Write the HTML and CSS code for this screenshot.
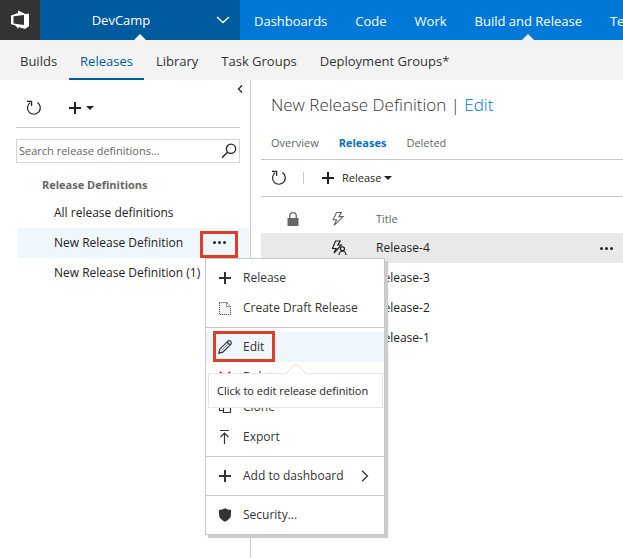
FILE: index.html
```html
<!DOCTYPE html>
<html lang="en">
<head>
<meta charset="utf-8">
<meta name="viewport" content="width=device-width, initial-scale=1">
<title>Releases - DevCamp</title>
<link rel="stylesheet" href="styles.css">
</head>
<body>
<svg class="sprite" aria-hidden="true">
  <symbol id="i-plus" viewBox="0 0 14 14"><path d="M7 1v12M1 7h12" fill="none" stroke="currentColor" stroke-width="2"/></symbol>
  <symbol id="i-refresh" viewBox="0 0 16 16"><path d="M4 2.8a6.4 6.4 0 1 0 7.4-.3M1 1.4h4.6v4.5" fill="none" stroke="currentColor" stroke-width="1.2"/></symbol>
  <symbol id="i-bolt" viewBox="0 0 14 16"><path d="M5.500 1.500h5L7.800 5.600h4.400L3 14.300l2.600-5.500H2.100z" fill="none" stroke="currentColor" stroke-width="1.1"/></symbol>
</svg>

<header class="topbar">
  <a class="logo" href="#" aria-label="Home">
    <svg width="20" height="20" viewBox="0 0 20 20"><path fill="#fff" fill-rule="evenodd" d="M1 5.500 8 3V.5L15.500 4l3.500-.5v12.700l-4 2.800-6.500-2v2L5 15.200l-4-1zM3.500 6.300v7.200L14 15V5z"/></svg>
  </a>
  <button class="project" type="button">
    <span class="project-name">DevCamp</span>
    <svg class="chevron" width="14" height="8" viewBox="0 0 14 8"><path d="m1 1 6 5.500L13 1" fill="none" stroke="currentColor" stroke-width="1.4"/></svg>
  </button>
  <nav class="hubs">
    <a href="#">Dashboards</a>
    <a href="#">Code</a>
    <a href="#">Work</a>
    <a class="current" href="#">Build and Release</a>
    <a href="#">Test</a>
  </nav>
</header>

<nav class="subnav">
  <a href="#">Builds</a>
  <a class="current" href="#">Releases</a>
  <a href="#">Library</a>
  <a href="#">Task Groups</a>
  <a href="#">Deployment Groups*</a>
</nav>

<div class="workspace">
  <aside class="sidebar">
    <button class="collapse" type="button" aria-label="Collapse pane">
      <svg width="6" height="8" viewBox="0 0 6 8"><path d="M5 .5 1.500 4 5 7.500" fill="none" stroke="currentColor" stroke-width="1.3"/></svg>
    </button>
    <div class="side-tools">
      <button type="button" aria-label="Refresh"><svg width="16" height="16"><use href="#i-refresh"/></svg></button>
      <button class="add" type="button" aria-label="New">
        <svg width="14" height="14"><use href="#i-plus"/></svg><span class="caret"></span>
      </button>
    </div>
    <form class="search">
      <input type="text" aria-label="Search release definitions" placeholder="Search release definitions...">
      <button type="submit" aria-label="Search">
        <svg width="16" height="16" viewBox="0 0 16 16"><circle cx="10" cy="5.800" r="4.600" fill="none" stroke="currentColor" stroke-width="1.3"/><path d="M6.700 9.100 1 14.800" stroke="currentColor" stroke-width="1.4"/></svg>
      </button>
    </form>
    <h2>Release Definitions</h2>
    <ul class="definitions">
      <li><a href="#">All release definitions</a></li>
      <li class="selected">
        <a href="#">New Release Definition</a>
        <button class="more highlight" type="button" aria-label="More actions"><i></i><i></i><i></i></button>
        <div class="menu" role="menu">
          <button type="button" role="menuitem"><svg width="14" height="14"><use href="#i-plus"/></svg>Release</button>
          <button type="button" role="menuitem"><svg width="14" height="14" viewBox="0 0 14 14"><path d="M1.500 1.500h7l4 4v8h-11zM8.500 1.500v4h4" fill="#f4f4f4" stroke="currentColor" stroke-dasharray="1 1"/></svg>Create Draft Release</button>
          <hr>
          <button class="active" type="button" role="menuitem" aria-describedby="edit-tip">
            <svg width="14" height="14" viewBox="0 0 14 14"><path d="m.8 13.200 1-4L9.700 1.300a2 2 0 0 1 3 3L4.800 12.200zM9 2l3 3" fill="none" stroke="currentColor" stroke-width="1.200"/><path d="m3.600 10.400 6-6" stroke="currentColor" stroke-width=".6"/></svg>Edit
          </button>
          <button type="button" role="menuitem"><svg class="danger" width="14" height="14" viewBox="0 0 14 14"><path d="m2 2 10 10M12 2 2 12" stroke="currentColor" stroke-width="2"/></svg>Delete</button>
          <button type="button" role="menuitem"><svg width="14" height="14" viewBox="0 0 14 14"><path d="M5.500 3.500h7v9h-7zM5.500 10.500h-4v-9h7v2" fill="none" stroke="currentColor" stroke-width="1.200"/></svg>Clone</button>
          <button type="button" role="menuitem"><svg width="14" height="14" viewBox="0 0 14 14"><path d="M2 .5h9M6.500 14V3M2.500 7l4-4 4 4" fill="none" stroke="currentColor" stroke-width="1.200"/></svg>Export</button>
          <hr>
          <button type="button" role="menuitem"><svg width="14" height="14"><use href="#i-plus"/></svg>Add to dashboard
            <svg class="submenu" width="8" height="12" viewBox="0 0 8 12"><path d="m1 .7 5.500 5.300L1 11.300" fill="none" stroke="currentColor" stroke-width="1.300"/></svg>
          </button>
          <hr>
          <button type="button" role="menuitem"><svg width="14" height="14" viewBox="0 0 14 14"><path d="M7 .3Q9.500 2 13 2v4.500q0 4.500-6 7.200Q1 11 1 6.500V2q3.500 0 6-1.700z" fill="currentColor"/></svg>Security...</button>
          <span class="edit-mark"></span>
          <div class="tooltip" id="edit-tip" role="tooltip">Click to edit release definition</div>
        </div>
      </li>
      <li><a href="#">New Release Definition (1)</a></li>
    </ul>
  </aside>

  <main>
    <h1>New Release Definition | <a href="#">Edit</a></h1>
    <nav class="tabs">
      <a href="#">Overview</a>
      <a class="current" href="#">Releases</a>
      <a href="#">Deleted</a>
    </nav>
    <div class="main-tools">
      <button type="button" aria-label="Refresh"><svg width="16" height="16"><use href="#i-refresh"/></svg></button>
      <span class="divider"></span>
      <button class="release" type="button"><svg width="14" height="14"><use href="#i-plus"/></svg><span>Release</span><span class="caret"></span></button>
    </div>
    <table>
      <colgroup><col class="c-lock"><col class="c-bolt"><col><col class="c-more"></colgroup>
      <thead>
        <tr>
          <th aria-label="Locked"><svg width="12" height="14" viewBox="0 0 12 14"><path d="M2.700 7V4a3.300 3.300 0 0 1 6.600 0v3" fill="none" stroke="currentColor" stroke-width="1.300"/><path d="M.5 6h11v8H.5z" fill="currentColor"/></svg></th>
          <th aria-label="Trigger"><svg width="14" height="16"><use href="#i-bolt"/></svg></th>
          <th>Title</th>
          <th></th>
        </tr>
      </thead>
      <tbody>
        <tr class="selected">
          <td></td>
          <td><svg width="16" height="16" viewBox="0 0 16 16"><path d="M4.500 1h4.700L6.800 5h3.500L3 13l2-4.500H1.500z" fill="none" stroke="currentColor" stroke-width="1.200"/><circle cx="11.500" cy="8.800" r="2" fill="#e9e9e9" stroke="currentColor" stroke-width="1.200"/><path d="M8 15q.5-4 3.500-4t3.500 4" fill="none" stroke="currentColor" stroke-width="1.200"/></svg></td>
          <td>Release-4</td>
          <td><button class="more" type="button" aria-label="More actions"><i></i><i></i><i></i></button></td>
        </tr>
        <tr><td></td><td></td><td>Release-3</td><td></td></tr>
        <tr><td></td><td></td><td>Release-2</td><td></td></tr>
        <tr><td></td><td></td><td>Release-1</td><td></td></tr>
      </tbody>
    </table>
  </main>
</div>
</body>
</html>
```
FILE: styles.css
```css
* { box-sizing: border-box; }

body {
  margin: 0;
  min-height: 100vh;
  display: flex;
  flex-direction: column;
  overflow-x: hidden;
  background: #fff;
  color: #222;
  font: 12px/20px "Open Sans", "Noto Sans", sans-serif;
}

a { color: inherit; text-decoration: none; }

button {
  display: flex;
  align-items: center;
  margin: 0;
  padding: 0;
  border: 0;
  background: none;
  color: inherit;
  font: inherit;
}

svg { display: block; flex: none; }
.sprite { position: absolute; width: 0; height: 0; }

.topbar {
  display: flex;
  height: 40px;
  overflow: hidden;
  background: #0078d7;
  color: #fff;
  font-size: 13px;
}

.logo {
  flex: 0 0 40px;
  display: grid;
  place-items: center;
  background: #333;
}

.project {
  position: relative;
  flex: 0 0 200px;
  padding: 0 10px;
  background: #005a9e;
}

.project-name { flex: 1; padding-right: 24px; text-align: center; }

.hubs { display: flex; white-space: nowrap; }
.hubs a { position: relative; display: flex; align-items: center; padding: 2px 14px 0; }

.project::after,
.hubs .current::after {
  content: "";
  position: absolute;
  left: 50%;
  bottom: 0;
  margin-left: -6px;
  border: 6px solid transparent;
  border-top: 0;
  border-bottom-color: #f3f3f3;
}

.subnav {
  display: flex;
  gap: 1px;
  height: 40px;
  padding-left: 9px;
  background: #f3f3f3;
  color: #333;
  font-size: 13px;
  white-space: nowrap;
}

.subnav a {
  display: flex;
  align-items: center;
  padding: 3px 11px 0;
  border-bottom: 2px solid transparent;
}

.subnav .current { border-color: #005a9e; color: #005a9e; }

.workspace { flex: 1; display: flex; }

.sidebar {
  position: relative;
  flex: 0 0 251px;
  border-right: 1px solid #c8c8c8;
}

.collapse { position: absolute; top: 5px; right: 7px; }

.side-tools {
  display: flex;
  align-items: center;
  gap: 26px;
  height: 48px;
  margin: 0 10px 11px 16px;
  padding: 8px 10px 0;
  border-bottom: 1px solid #c8c8c8;
}

.add { gap: 4px; }

.caret {
  border: 4px solid transparent;
  border-top-color: currentColor;
  border-bottom: 0;
}

.search {
  display: flex;
  align-items: center;
  height: 24px;
  margin: 0 10px 0 16px;
  padding: 0 2px;
  border: 1px solid #d4d4d4;
}

.search input {
  flex: 1;
  min-width: 0;
  padding: 0;
  border: 0;
  outline: 0;
  color: #222;
  font: inherit;
  font-size: 11px;
}

.search input::placeholder { color: #666; opacity: 1; }

h2 {
  margin: 12px 0 3px 42px;
  color: #666;
  font-size: 11px;
  font-weight: 700;
  line-height: 20px;
}

.definitions {
  margin: 0;
  padding: 0;
  list-style: none;
  white-space: nowrap;
}

.definitions li {
  position: relative;
  display: flex;
  align-items: center;
  height: 30px;
  margin: 0 1px 0 18px;
  padding-left: 36px;
}

.definitions .selected { z-index: 1; background: #eff6fc; }

.more { gap: 2px; }
.more i { width: 3px; height: 3px; border-radius: 50%; background: #222; }

.highlight {
  position: absolute;
  top: 3px;
  right: 11px;
  justify-content: center;
  width: 38px;
  height: 27px;
  padding-bottom: 4px;
  border: 3px solid #dc3e26;
}

.menu {
  position: absolute;
  top: 30px;
  left: 187px;
  width: 180px;
  padding: 4px 0;
  border: 1px solid #c8c8c8;
  background: #fff;
  box-shadow: 3px 3px 1px #ccc;
  color: #333;
}

.menu button { width: 100%; height: 30px; padding-left: 12px; gap: 11px; }
.menu .active { background: #eff6fc; }
.menu hr { margin: 4px 0; border: 0; border-top: 1px solid #c8c8c8; }
.menu .submenu { margin-left: auto; margin-right: 15px; }
.danger { color: #e81123; }

.edit-mark {
  position: absolute;
  top: 72px;
  left: 7px;
  width: 62px;
  height: 31px;
  border: 3px solid #dc3e26;
}

.tooltip {
  position: absolute;
  top: 114px;
  left: 2px;
  right: 1px;
  padding: 7px 8px 6px;
  border: 1px solid #e6e6e6;
  background: #fff;
  color: #222;
  font-size: 11px;
}

.tooltip::before {
  content: "";
  position: absolute;
  top: -8px;
  left: 50%;
  width: 15px;
  height: 15px;
  margin-left: -8px;
  border: 1px solid #e6e6e6;
  border-width: 1px 0 0 1px;
  background: #fff;
  transform: rotate(45deg);
}

main { flex: 1; min-width: 0; padding-left: 10px; }

h1 {
  margin: 13px 0 0 10px;
  color: #333;
  font-size: 17px;
  font-weight: 300;
  line-height: 24px;
}

h1 a { color: #0078d7; }

.tabs {
  display: flex;
  gap: 20px;
  height: 43px;
  padding: 16px 10px 0;
  border-bottom: 1px solid #c8c8c8;
  color: #666;
  font-size: 11px;
}

.tabs .current { color: #106ebe; font-weight: 700; }

.main-tools {
  display: flex;
  align-items: center;
  height: 37px;
  padding-left: 10px;
  border-bottom: 1px solid #c8c8c8;
  font-size: 11px;
}

.divider { height: 12px; margin: 0 17px 0 16px; border-left: 1px solid #c8c8c8; }
.release span { margin-left: 3px; }
.release svg { margin-right: 4px; }

table {
  width: 100%;
  margin-top: 8px;
  border-collapse: collapse;
  table-layout: fixed;
}

.c-lock { width: 70px; }
.c-bolt { width: 45px; }
.c-more { width: 23px; }
tr { height: 30px; }
thead tr { height: 28px; }
th, td { padding: 0; text-align: left; }
th { color: #666; font-size: 11px; font-weight: 400; }
th:first-child { padding-left: 26px; }
tbody .selected { background: #e9e9e9; }
```
